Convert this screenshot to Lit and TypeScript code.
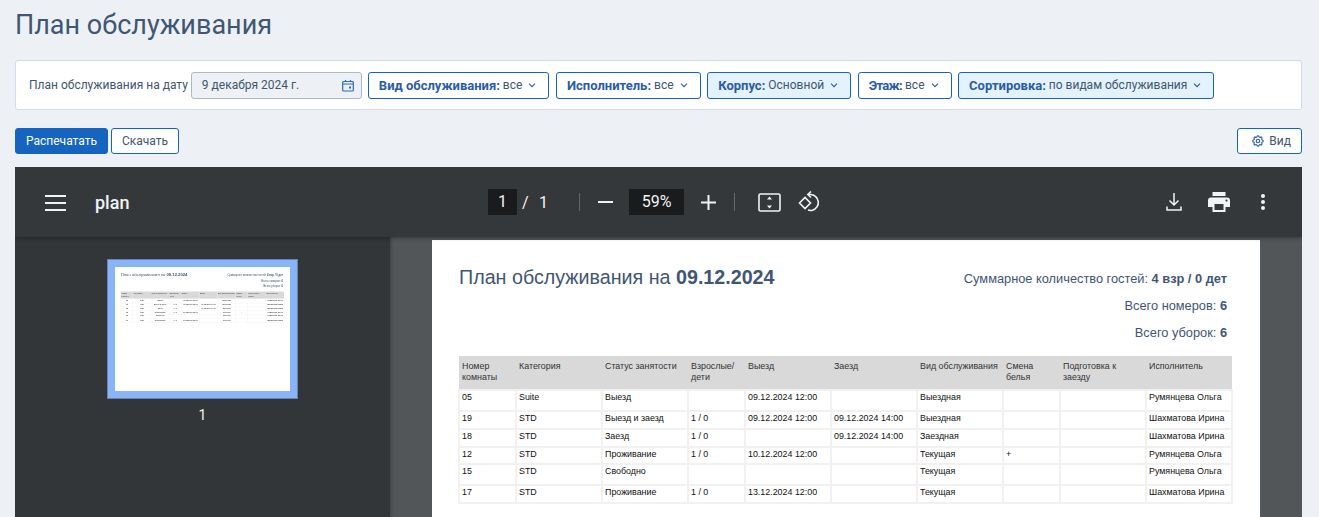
import { LitElement, html, css, svg } from "lit";
import { customElement } from "lit/decorators.js";

const rows = [
  { h: 21, c: ["05", "Suite", "Выезд", "", "09.12.2024 12:00", "", "Выездная", "", "", "Румянцева Ольга"] },
  { h: 18, c: ["19", "STD", "Выезд и заезд", "1 / 0", "09.12.2024 12:00", "09.12.2024 14:00", "Выездная", "", "", "Шахматова Ирина"] },
  { h: 18, c: ["18", "STD", "Заезд", "1 / 0", "", "09.12.2024 14:00", "Заездная", "", "", "Шахматова Ирина"] },
  { h: 17, c: ["12", "STD", "Проживание", "1 / 0", "10.12.2024 12:00", "", "Текущая", "+", "", "Румянцева Ольга"] },
  { h: 21, c: ["15", "STD", "Свободно", "", "", "", "Текущая", "", "", "Румянцева Ольга"] },
  { h: 18, c: ["17", "STD", "Проживание", "1 / 0", "13.12.2024 12:00", "", "Текущая", "", "", "Шахматова Ирина"] },
];

const heads = ["Номер комнаты", "Категория", "Статус занятости", "Взрослые/ дети", "Выезд", "Заезд", "Вид обслуживания", "Смена белья", "Подготовка к заезду", "Исполнитель"];
const widths = [57, 86, 86, 57, 86, 86, 86, 57, 86, 86];

const chevron = svg`<svg class="chev" width="10" height="10" viewBox="0 0 10 10"><path d="M2 3.6 5 6.6 8 3.6" fill="none" stroke="currentColor" stroke-width="1.1"/></svg>`;

@customElement("plan-sheet")
class PlanSheet extends LitElement {
  static styles = css`
    :host {
      display: block;
      width: 828px;
      height: 586px;
      background: #fff;
      box-sizing: border-box;
      padding: 25px 28px 0 27px;
      font-family: "Liberation Sans", Arial, sans-serif;
    }
    .top {
      display: flex;
      justify-content: space-between;
      align-items: flex-start;
      color: #3f5674;
      height: 91px;
    }
    h2 {
      margin: 0;
      font-size: 19.7px;
      line-height: 24px;
      font-weight: 400;
    }
    .totals {
      margin: 0 5px 0 0;
      font-size: 12.8px;
      line-height: 27px;
      text-align: right;
    }
    table {
      border-collapse: collapse;
      table-layout: fixed;
      width: 773px;
      margin-left: -1px;
      font-size: 8.9px;
      line-height: 11px;
      color: #111;
    }
    th {
      background: #d9d9d9;
      height: 34px;
      padding: 5px 5px 0 3px;
      box-sizing: border-box;
      font-weight: 400;
      text-align: left;
      vertical-align: top;
      color: #333;
    }
    td {
      padding: 1px 0 0 2px;
      border: 2px solid #f1f1f1;
      vertical-align: top;
      white-space: nowrap;
      overflow: hidden;
      box-sizing: border-box;
    }
  `;

  render() {
    return html`
      <div class="top">
        <h2>План обслуживания на <b>09.12.2024</b></h2>
        <div class="totals">
          <div>Суммарное количество гостей: <b>4 взр / 0 дет</b></div>
          <div>Всего номеров: <b>6</b></div>
          <div>Всего уборок: <b>6</b></div>
        </div>
      </div>
      <table>
        <colgroup>${widths.map((w) => html`<col style="width:${w}px" />`)}</colgroup>
        <tr>${heads.map((h) => html`<th>${h}</th>`)}</tr>
        ${rows.map(
          (r) => html`<tr style="height:${r.h}px">${r.c.map((c) => html`<td>${c}</td>`)}</tr>`
        )}
      </table>
    `;
  }
}

@customElement("app-root")
class AppRoot extends LitElement {
  static styles = css`
    :host {
      display: block;
      height: 517px;
      overflow: hidden;
      background: #edf1f5;
      box-sizing: border-box;
      padding: 0 17px 0 15px;
      font-family: Roboto, "Noto Sans", sans-serif;
    }
    h1 {
      margin: 0;
      padding-top: 6px;
      height: 60px;
      box-sizing: border-box;
      font-size: 27px;
      line-height: 38px;
      font-weight: 400;
      color: #3f5674;
    }
    .filters {
      display: flex;
      align-items: center;
      height: 50px;
      box-sizing: border-box;
      padding: 0 13px;
      background: #fff;
      border: 1px solid #d3dce8;
      border-radius: 3px;
      font-size: 12px;
      color: #41566f;
    }
    .date {
      display: flex;
      align-items: center;
      justify-content: space-between;
      width: 171px;
      height: 27px;
      margin: 0 6px 0 3px;
      padding: 0 7px 0 10px;
      box-sizing: border-box;
      background: #edf1f5;
      border: 1px solid #a9b8cb;
      border-radius: 3px;
    }
    .drop {
      display: flex;
      align-items: center;
      height: 27px;
      margin-right: 6.6px;
      padding: 0 11px 0 10px;
      box-sizing: border-box;
      background: #fff;
      border: 1px solid #1565c0;
      border-radius: 3px;
      color: #41566f;
      white-space: nowrap;
    }
    .drop b {
      font-size: 13px;
      color: #2a5ca8;
      margin-right: 3px;
    }
    .drop.on {
      background: #e3f2fd;
    }
    .drop.short b {
      letter-spacing: -0.7px;
    }
    .chev {
      margin-left: 5px;
      color: #2a5ca8;
    }
    .actions {
      display: flex;
      gap: 3px;
      margin: 18px 0 13px;
    }
    .btn {
      display: flex;
      align-items: center;
      height: 26px;
      padding: 0 10px;
      box-sizing: border-box;
      font-size: 12px;
      border: 1px solid #1565c0;
      border-radius: 3px;
      background: #fff;
      color: #41566f;
    }
    .btn.primary {
      background: #1565c0;
      color: #fff;
    }
    .btn.view {
      margin-left: auto;
      gap: 4px;
      padding: 0 10px 0 13px;
    }
    .viewer {
      height: 350px;
      overflow: hidden;
      background: #525659;
    }
    .bar {
      position: relative;
      z-index: 2;
      display: flex;
      align-items: center;
      height: 70px;
      background: #35383b;
      box-shadow: 0 1px 4px rgba(0, 0, 0, 0.35);
      color: #f1f3f4;
      font-family: Roboto, sans-serif;
    }
    .bar svg {
      display: block;
      flex: none;
    }
    .name {
      margin-left: 29px;
      width: 393px;
      font-size: 18px;
      font-weight: 500;
      padding-top: 1px;
    }
    .num {
      width: 29px;
      height: 26px;
      line-height: 26px;
      text-align: center;
      background: #191b1c;
      font-size: 16px;
    }
    .of {
      margin-left: 5px;
      width: 26px;
      margin-right: 2px;
      display: flex;
      justify-content: space-between;
      font-size: 16px;
    }
    .sep {
      width: 1px;
      height: 18px;
      background: #63676a;
    }
    .zoom {
      width: 55px;
      height: 26px;
      line-height: 26px;
      text-align: center;
      background: #191b1c;
      font-size: 16px;
    }
    .body {
      display: flex;
      height: 280px;
    }
    .side {
      width: 375px;
      flex: none;
      background: #323639;
      box-shadow: 1px 0 3px rgba(0, 0, 0, 0.25);
      padding-top: 22px;
      box-sizing: border-box;
      color: #f1f3f4;
      text-align: center;
      font-family: Roboto, sans-serif;
      font-size: 14px;
    }
    .thumb {
      width: 175px;
      height: 124px;
      margin: 0 0 0 92px;
      background: #fff;
      border: 8px solid #8ab4f8;
      outline: 1px solid #6a83a8;
      outline-offset: -1px;
      overflow: hidden;
    }
    .thumb plan-sheet {
      transform: scale(0.2113);
      transform-origin: 0 0;
      filter: blur(2.6px);
    }
    .thumb-no {
      margin: 8px 0 0 0;
    }
    .canvas {
      flex: 1;
      min-width: 0;
      padding: 3px 0 0 42px;
    }
  `;

  render() {
    const drop = (label: string, value: string, cls = "") =>
      html`<div class="drop ${cls}"><b>${label}</b>${value}${chevron}</div>`;
    return html`
      <h1>План обслуживания</h1>
      <div class="filters">
        <span>План обслуживания на дату</span>
        <div class="date">
          <span>9 декабря 2024 г.</span>
          <svg width="12" height="13" viewBox="0 0 12 13"><path d="M1.5 2.5h9a.8.8 0 0 1 .8.8v7.900a.8.8 0 0 1-.8.8h-9a.8.8 0 0 1-.8-.8V3.300a.8.8 0 0 1 .8-.8zM1 5h10M3.500 1v2M8.500 1v2" fill="none" stroke="#2a6cb8" stroke-width="1.200"/><rect x="7" y="7.500" width="2" height="2" fill="#2a6cb8"/></svg>
        </div>
        ${drop("Вид обслуживания:", "все")}
        ${drop("Исполнитель:", "все")}
        ${drop("Корпус:", "Основной", "on")}
        ${drop("Этаж:", "все", "short")}
        ${drop("Сортировка:", "по видам обслуживания", "on")}
      </div>
      <div class="actions">
        <div class="btn primary">Распечатать</div>
        <div class="btn">Скачать</div>
        <div class="btn view">
          <svg width="14" height="14" viewBox="0 0 24 24" fill="none" stroke="#2a5ca8" stroke-width="2"><path d="M10.325 4.317c.426-1.756 2.924-1.756 3.350 0a1.724 1.724 0 0 0 2.573 1.066c1.543-.94 3.310.826 2.370 2.370a1.724 1.724 0 0 0 1.065 2.572c1.756.426 1.756 2.924 0 3.350a1.724 1.724 0 0 0-1.066 2.573c.94 1.543-.826 3.310-2.370 2.370a1.724 1.724 0 0 0-2.572 1.065c-.426 1.756-2.924 1.756-3.350 0a1.724 1.724 0 0 0-2.573-1.066c-1.543.94-3.310-.826-2.370-2.370a1.724 1.724 0 0 0-1.065-2.572c-1.756-.426-1.756-2.924 0-3.350a1.724 1.724 0 0 0 1.066-2.573c-.94-1.543.826-3.310 2.370-2.370c1 .608 2.296.07 2.572-1.065z"/><circle cx="12" cy="12" r="3"/></svg>
          Вид
        </div>
      </div>
      <div class="viewer">
        <div class="bar">
          <svg style="margin:1px 0 0 30px" width="21" height="16" viewBox="0 0 21 16"><path d="M0 0h21v2H0zM0 7h21v2H0zM0 14h21v2H0z" fill="#f1f3f4"/></svg>
          <div class="name">plan</div>
          <div class="num">1</div>
          <div class="of"><span>/</span><span>1</span></div>
          <div class="sep" style="margin-left:29px"></div>
          <svg style="margin-left:18px" width="15" height="2" viewBox="0 0 15 2"><path d="M0 0h15v2H0z" fill="#f1f3f4"/></svg>
          <div class="zoom" style="margin-left:16px">59%</div>
          <svg style="margin-left:17px" width="15" height="15" viewBox="0 0 15 15"><path d="M6.500 0h2v6.500H15v2H8.500V15h-2V8.500H0v-2h6.500z" fill="#f1f3f4"/></svg>
          <div class="sep" style="margin-left:18px"></div>
          <svg style="margin-left:23px" width="23" height="19" viewBox="0 0 23 19"><rect x="1" y="1" width="21" height="17" rx="1.500" fill="none" stroke="#f1f3f4" stroke-width="1.600"/><path d="M11.500 3.500 14 6.500H9zM11.500 15.500 9 12.500h5z" fill="#f1f3f4"/></svg>
          <svg style="margin-left:17px" width="22" height="22" viewBox="0 0 22 22" fill="none" stroke="#f1f3f4" stroke-width="1.600"><path d="M1.500 12 7 6.500 12.500 12 7 17.500z"/><path d="M10 3.500h2.500a8 8 0 0 1 2 15.700c-1.500.4-3 .3-4.500-.2"/><path d="M13 .5 9.800 3.500 13 6.500"/></svg>
          <svg style="margin-left:auto" width="16" height="18" viewBox="0 0 16 18"><path d="M8 0v12M3.500 7.500 8 12l4.500-4.500M1 13.500V17h14v-3.500" fill="none" stroke="#f1f3f4" stroke-width="1.500"/></svg>
          <svg style="margin-left:26px" width="22" height="20" viewBox="0 0 22 20"><path d="M4.500 0h13v4h-13zM3 5.500h16a3 3 0 0 1 3 3V15h-4.500v5h-13v-5H0V8.500a3 3 0 0 1 3-3zM6.500 12v6h9v-6z" fill="#f1f3f4" fill-rule="evenodd"/><circle cx="18.500" cy="8.500" r="1.100" fill="#35383b"/></svg>
          <svg style="margin:0 37px 0 31px" width="4" height="16" viewBox="0 0 4 16"><circle cx="2" cy="2" r="2" fill="#f1f3f4"/><circle cx="2" cy="8" r="2" fill="#f1f3f4"/><circle cx="2" cy="14" r="2" fill="#f1f3f4"/></svg>
        </div>
        <div class="body">
          <div class="side">
            <div class="thumb"><plan-sheet></plan-sheet></div>
            <div class="thumb-no">1</div>
          </div>
          <div class="canvas"><plan-sheet></plan-sheet></div>
        </div>
      </div>
    `;
  }
}
